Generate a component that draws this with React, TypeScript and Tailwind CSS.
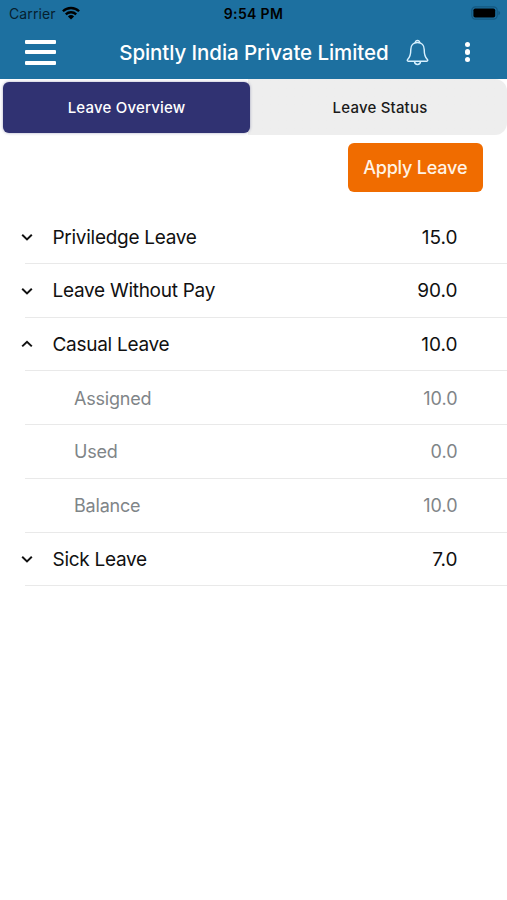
import { useState } from 'react';

type Tab = 'overview' | 'status';

interface Leave {
  name: string;
  total: string;
  assigned: string;
  used: string;
  balance: string;
}

const LEAVES: Leave[] = [
  { name: 'Priviledge Leave',  total: '15.0', assigned: '15.0', used: '0.0', balance: '15.0' },
  { name: 'Leave Without Pay', total: '90.0', assigned: '90.0', used: '0.0', balance: '90.0' },
  { name: 'Casual Leave',      total: '10.0', assigned: '10.0', used: '0.0', balance: '10.0' },
  { name: 'Sick Leave',        total: '7.0',  assigned: '7.0',  used: '0.0', balance: '7.0' },
];

function WifiIcon() {
  return (
    <svg width="18" height="14" viewBox="0 0 18 14" className="-mt-[2px]" fill="none" stroke="#000" strokeWidth="2.3">
      <path d="M0.9 5.3 A11.6 11.6 0 0 1 17.1 5.3" />
      <path d="M3.8 8.4 A7.4 7.4 0 0 1 14.2 8.4" />
      <path d="M9 13.6 L5.9 10.4 A4.6 4.6 0 0 1 12.1 10.4 Z" fill="#000" stroke="none" />
    </svg>
  );
}

function BatteryIcon() {
  return (
    <svg width="30" height="14" viewBox="0 0 30 14" className="-mt-[2px]">
      <rect x="0.8" y="0.8" width="25.4" height="12.4" rx="3.6" fill="none" stroke="#145880" strokeWidth="1.2" />
      <rect x="2.4" y="2.4" width="21.8" height="9.2" rx="1.8" fill="#000" />
      <path d="M27.4 4.8 Q29.2 5.6 29.2 7 Q29.2 8.4 27.4 9.2 Z" fill="#145880" />
    </svg>
  );
}

function BellIcon() {
  return (
    <svg width="23" height="27" viewBox="0 0 24 28" fill="none" stroke="#d8f1ff" strokeWidth="1.5" strokeLinejoin="round">
      <path d="M9.8 3.8 C9.6 0.6 14.4 0.6 14.2 3.8" />
      <path d="M12 3.6 C7.6 3.6 5 6.6 5 10.8 C5 16.7 4.3 18.8 1.7 21.3 C1 22 1.3 23.1 2.3 23.1 H21.7 C22.7 23.1 23 22 22.3 21.3 C19.7 18.8 19 16.7 19 10.8 C19 6.6 16.4 3.6 12 3.6 Z" />
      <path d="M8.8 23.3 C9.2 27.6 14.8 27.6 15.2 23.3" />
    </svg>
  );
}

function Chevron({ open }: { open: boolean }) {
  return (
    <svg width="12" height="8" viewBox="0 0 12 8" fill="none" stroke="#111" strokeWidth="2">
      <path d={open ? 'M1.2 6.4 L6 1.8 L10.8 6.4' : 'M1.2 1.8 L6 6.4 L10.8 1.8'} />
    </svg>
  );
}

function DetailRow({ label, value }: { label: string; value: string }) {
  return (
    <div className="ml-[25px] h-[53.75px] pt-[2px] pl-[49px] pr-[49.5px] flex items-center justify-between border-b border-[#e9e9e9] text-lg text-[#7f8588]">
      <span className="tracking-[-0.2px]">{label}</span>
      <span>{value}</span>
    </div>
  );
}

export default function App() {
  const [tab,  setTab]  = useState<Tab>('overview');
  const [open, setOpen] = useState<string | null>('Casual Leave');

  const toggle = (name: string) => {
    setOpen(prev => prev === name ? null : name);
  };

  return (
    <div className="h-screen bg-white flex flex-col overflow-hidden font-['Inter','Liberation_Sans',sans-serif]">
      <header className="h-[79px] shrink-0 bg-[#1d70a0]">
        <div className="h-7 pl-[9px] pr-[6px] grid grid-cols-3 items-center text-sm text-black">
          <div className="flex items-center gap-[6px]">
            <span className="tracking-[0.1px] text-[#06202f]">Carrier</span>
            <WifiIcon />
          </div>
          <span className="-ml-[3px] text-center font-semibold tracking-[0.35px]">9:54 PM</span>
          <div className="flex justify-end">
            <BatteryIcon />
          </div>
        </div>
        <div className="h-12 pl-[25px] pr-[37px] flex items-center">
          <button className="w-[31px] flex flex-col gap-[6.5px]" aria-label="Menu">
            <span className="w-full h-1 rounded-[1px] bg-white" />
            <span className="w-full h-1 rounded-[1px] bg-white" />
            <span className="w-full h-1 rounded-[1px] bg-white" />
          </button>
          <h1 className="ml-auto pt-[2px] text-[20.5px] font-medium text-white tracking-[-0.08px] whitespace-nowrap">
            Spintly India Private Limited
          </h1>
          <button className="ml-[17px]" aria-label="Notifications">
            <BellIcon />
          </button>
          <button className="ml-9 flex flex-col gap-[2px]" aria-label="More">
            <span className="size-[5.5px] rounded-full bg-white" />
            <span className="size-[5.5px] rounded-full bg-white" />
            <span className="size-[5.5px] rounded-full bg-white" />
          </button>
        </div>
      </header>

      <div className="h-14 shrink-0 pl-[3px] pt-[3px] pb-[2px] flex rounded-r-xl bg-linear-to-r from-white from-49% to-[#eeeeee] to-49%">
        <button
          onClick={() => setTab('overview')}
          className={[
            'w-[247px] pt-px rounded-md text-[15px] font-medium tracking-[0.2px]',
            tab === 'overview' ? 'bg-[#303272] text-white shadow-[0_0_3px_rgba(48,50,114,0.45)]' : 'text-[#1a1a1a]',
          ].join(' ')}
        >
          Leave Overview
        </button>
        <button
          onClick={() => setTab('status')}
          className={[
            'flex-1 pt-px rounded-md pl-[3px] text-[15px] font-medium tracking-[0.2px]',
            tab === 'status' ? 'bg-[#303272] text-white' : 'text-[#1a1a1a]',
          ].join(' ')}
        >
          Leave Status
        </button>
      </div>

      <div className="flex justify-end pt-[7.5px] pr-[24.5px]">
        <button className="w-[134.5px] h-[49px] pt-px rounded-md bg-[#f06c00] text-lg font-medium tracking-[-0.2px] text-[#fff3e6]">
          Apply Leave
        </button>
      </div>

      <main className="pt-[18.5px]">
        {LEAVES.map(leave => (
          <section key={leave.name}>
            <div
              onClick={() => toggle(leave.name)}
              className="ml-[25px] h-[53.75px] pr-[49.5px] flex items-center border-b border-[#e9e9e9] text-[19px] text-[#111]"
            >
              <span className="-ml-[4.5px] w-[32px] pt-px">
                <Chevron open={open === leave.name} />
              </span>
              <span className="flex-1 pt-[3px] tracking-[-0.28px]">{leave.name}</span>
              <span className="pt-[3px]">{leave.total}</span>
            </div>
            {open === leave.name && (
              <>
                <DetailRow label="Assigned" value={leave.assigned} />
                <DetailRow label="Used" value={leave.used} />
                <DetailRow label="Balance" value={leave.balance} />
              </>
            )}
          </section>
        ))}
      </main>
    </div>
  );
}
